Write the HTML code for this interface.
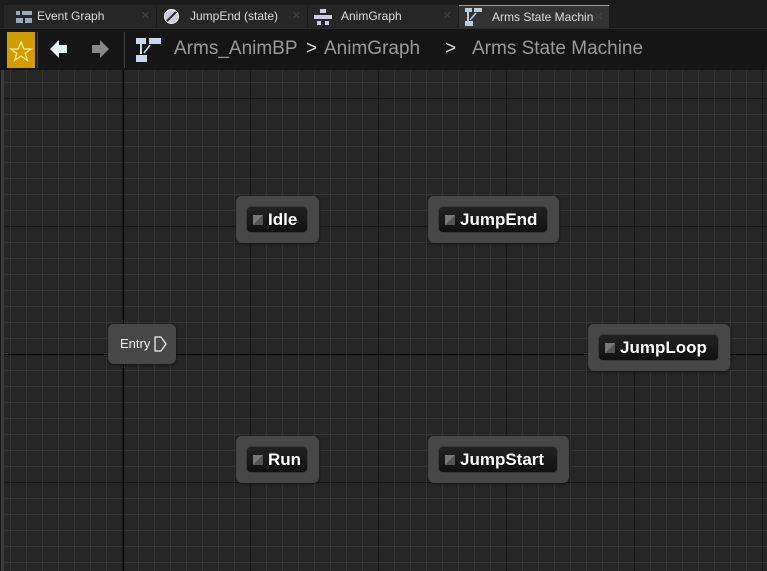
<!DOCTYPE html><html><head><style>
body{margin:0;width:767px;height:571px;overflow:hidden;background:#1a1a1a;font-family:"Liberation Sans",sans-serif;position:relative}
.tabs{position:absolute;left:0;top:0;width:767px;height:28px;background:#1c1c1c}
.tab{position:absolute;top:5px;height:23px;background:#2a2a2a;color:#ddd;font-size:12px;line-height:23px;box-sizing:border-box;padding-left:33px}
.tab .x{position:absolute;right:6px;top:0;color:#444;font-size:11px}
.tool{position:absolute;left:0;top:28px;width:767px;height:42px;background:#151515;border-top:1px solid #2c2c2c}
.canvas{position:absolute;left:4px;top:70px;width:763px;height:501px;background-color:#262626;
background-image:
linear-gradient(#000,#000),linear-gradient(#000,#000),
repeating-linear-gradient(90deg,transparent 0 122px,#191919 122px 123px,transparent 123px 128px),
repeating-linear-gradient(180deg,transparent 0 28px,#191919 28px 29px,transparent 29px 128px),
repeating-linear-gradient(90deg,transparent 0 6px,#353535 6px 7px,transparent 7px 16px),
repeating-linear-gradient(180deg,transparent 0 12px,#353535 12px 13px,transparent 13px 16px);
background-size:1px 501px,763px 1px,auto,auto,auto,auto;background-repeat:no-repeat,no-repeat,repeat,repeat,repeat,repeat;
background-position:119px 0,0 284px,-4px 0,0 0,0 0,0 0}
.strip{position:absolute;left:1px;top:70px;width:3px;height:501px;background:#3a3a3a}
.node{position:absolute;background:#474747;border-radius:6px;box-shadow:0 1px 3px rgba(0,0,0,.6)}
.in{position:absolute;left:10px;top:10px;bottom:10px;right:11px;background:linear-gradient(#222,#111);border-radius:5px;border:1px solid #3a3a3a;box-sizing:border-box;color:#fff;font-weight:bold;font-size:17px;line-height:25px;padding-left:21px;text-shadow:0 1px 1px #000}
.in:before{content:"";position:absolute;left:6px;top:8px;width:10px;height:10px;background:linear-gradient(135deg,#777 50%,#555 50%)}
.crumb{position:absolute;top:38px;font-size:19px;color:#9a9a9a}
</style></head><body>
<div class="tabs">
<div class="tab" style="left:4px;width:152px;background:#262626">Event Graph<span class="x">✕</span>
<svg style="position:absolute;left:12px;top:6px" width="16" height="12"><rect x="0" y="0" width="4" height="4" fill="#9ab"/><rect x="6" y="0" width="10" height="4" fill="#9ab"/><rect x="0" y="7" width="7" height="5" fill="#9ab"/><rect x="9" y="7" width="7" height="5" fill="#9ab"/></svg></div>
<div class="tab" style="left:157px;width:150px;background:#262626">JumpEnd (state)<span class="x">✕</span>
<svg style="position:absolute;left:6px;top:3px" width="17" height="17"><circle cx="8.5" cy="8.5" r="7" fill="#ccd" stroke="#fff"/><line x1="4" y1="13" x2="13" y2="4" stroke="#333" stroke-width="2"/></svg></div>
<div class="tab" style="left:308px;width:150px;background:#262626">AnimGraph<span class="x">✕</span>
<svg style="position:absolute;left:6px;top:4px" width="18" height="16"><rect x="6" y="0" width="6" height="4" fill="#ccd"/><rect x="0" y="6" width="18" height="4" fill="#ccd"/><rect x="3" y="12" width="4" height="4" fill="#ccd"/><rect x="11" y="12" width="4" height="4" fill="#ccd"/></svg></div>
<div class="tab" style="left:459px;width:150px;background:#333;border-top:1px solid #c8a000">Arms State Machin<span class="x">✕</span>
<svg style="position:absolute;left:6px;top:2px" width="17" height="18"><rect x="0" y="0" width="7" height="4" fill="#bcd"/><rect x="9" y="0" width="8" height="4" fill="#bcd"/><line x1="3" y1="4" x2="3" y2="13" stroke="#bcd" stroke-width="2"/><line x1="5" y1="12" x2="11" y2="5" stroke="#bcd" stroke-width="1.5"/><rect x="0" y="13" width="8" height="5" fill="#bcd"/></svg></div>
</div>
<div class="tool">
<div style="position:absolute;left:7px;top:3px;width:28px;height:36px;background:#d29b00"></div>
<svg style="position:absolute;left:9px;top:11px" width="24" height="22"><polygon points="12,2 14.8,9 22,9 16.2,13.5 18.5,20.5 12,16 5.5,20.5 7.8,13.5 2,9 9.2,9" fill="none" stroke="#ffe6a0" stroke-width="1.3"/></svg>
<div style="position:absolute;left:37px;top:3px;width:1px;height:36px;background:#444"></div>
<svg style="position:absolute;left:50px;top:10px" width="18" height="20"><polygon points="0,10 9,1 9,6 17,6 17,14 9,14 9,19" fill="#e8f4f8"/></svg>
<svg style="position:absolute;left:91px;top:10px" width="18" height="20"><polygon points="18,10 9,1 9,6 1,6 1,14 9,14 9,19" fill="#888"/></svg>
<div style="position:absolute;left:124px;top:3px;width:1px;height:36px;background:#444"></div>
<svg style="position:absolute;left:136px;top:9px" width="25" height="24"><rect x="0" y="0" width="10" height="6" fill="#ccd8ee"/><rect x="13" y="0" width="12" height="6" fill="#ccd8ee"/><line x1="5" y1="6" x2="5" y2="16" stroke="#ccd8ee" stroke-width="2"/><line x1="8" y1="15" x2="14" y2="7" stroke="#ccd8ee" stroke-width="1.5"/><rect x="0" y="17" width="11" height="7" fill="#ccd8ee"/></svg>
</div>
<div class="crumb" style="left:174px">Arms_AnimBP</div>
<div class="crumb" style="left:306px;color:#ddd">&gt;</div>
<div class="crumb" style="left:324px">AnimGraph</div>
<div class="crumb" style="left:445px;color:#ddd">&gt;</div>
<div class="crumb" style="left:472px">Arms State Machine</div>
<div class="canvas"></div>
<div class="strip"></div>
<div class="node" style="left:108px;top:324px;width:68px;height:40px"><span style="position:absolute;left:12px;top:12px;color:#eee;font-size:13px">Entry</span>
<svg style="position:absolute;left:46px;top:12px" width="14" height="16"><path d="M1 1H7L12 8L7 15H1Z" fill="none" stroke="#eee" stroke-width="1.3"/></svg></div>
<div class="node" style="left:236px;top:196px;width:83px;height:47px"><div class="in">Idle</div></div>
<div class="node" style="left:428px;top:196px;width:131px;height:47px"><div class="in">JumpEnd</div></div>
<div class="node" style="left:588px;top:324px;width:142px;height:47px"><div class="in">JumpLoop</div></div>
<div class="node" style="left:236px;top:436px;width:83px;height:47px"><div class="in">Run</div></div>
<div class="node" style="left:428px;top:436px;width:141px;height:47px"><div class="in">JumpStart</div></div>
</body></html>
